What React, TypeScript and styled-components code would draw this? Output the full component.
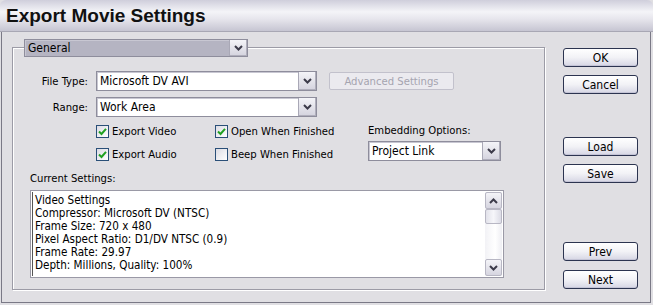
import React from 'react';
import styled, { createGlobalStyle } from 'styled-components';

const uiFont = '"DejaVu Sans Condensed", "Liberation Sans", sans-serif';

const GlobalStyle = createGlobalStyle`
  html, body {
    margin: 0;
    padding: 0;
    background: #e0dfe3;
  }
  body {
    font-family: ${uiFont};
    font-size: 11.2px;
    color: #000;
  }
`;

const Window = styled.div`
  width: 653px;
  height: 305px;
  box-sizing: border-box;
  display: flex;
  flex-direction: column;
  background: #e0dfe3;
  overflow: hidden;
`;

const TitleBar = styled.div`
  height: 31px;
  flex: none;
  display: flex;
  align-items: center;
  padding-left: 6px;
  border-top-left-radius: 6px;
  border-top-right-radius: 6px;
  background: linear-gradient(to bottom, #cfcedb 0%, #f4f4f8 38%, #e6e5ec 62%, #c6c5d2 100%);
  border-bottom: 1px solid #a8a7b4;
`;

const Title = styled.h1`
  margin: 0;
  font-family: "Liberation Sans", Arial, sans-serif;
  font-weight: bold;
  font-size: 19px;
  color: #111;
`;

const Body = styled.div`
  flex: 1;
  margin: 0 2px 2px 1px;
  border: 1px solid #7a7986;
  border-top: none;
  display: flex;
  padding: 15px 0 0 10px;
  box-sizing: border-box;
`;

const GroupBox = styled.div`
  width: 533px;
  height: 243px;
  box-sizing: border-box;
  border: 1px solid #9c9ba6;
  box-shadow: inset 1px 1px 0 #ffffff, 1px 1px 0 #ffffff;
  padding: 0 0 0 17px;
  display: flex;
  flex-direction: column;
`;

const GroupHeader = styled.div`
  margin: -9px 0 0 -6px;
  display: flex;
`;

const Select = styled.div<{ $width: number; $muted?: boolean; $height?: number }>`
  width: ${p => p.$width}px;
  height: ${p => p.$height ?? 20}px;
  box-sizing: border-box;
  display: flex;
  border: 1px solid #8e8d9c;
  background: ${p => (p.$muted ? '#b5b4c2' : '#ffffff')};
  box-shadow: inset 1px 1px 0 #c8c7d2;
`;

const SelectValue = styled.div`
  flex: 1;
  padding-left: 3px;
  display: flex;
  align-items: center;
  white-space: nowrap;
  overflow: hidden;
  font-size: 12px;
`;

const ArrowButton = styled.div`
  width: 17px;
  flex: none;
  display: flex;
  align-items: center;
  justify-content: center;
  border-left: 1px solid #a9a8b6;
  background: linear-gradient(to bottom, #f4f4f8, #d4d3de);
  box-shadow: inset -1px -1px 0 #b0afbc;
`;

const Chevron = ({ up }: { up?: boolean }) => (
  <svg width="9" height="6" viewBox="0 0 9 6">
    <path
      d={up ? 'M1 5 L4.5 1.5 L8 5' : 'M1 1 L4.5 4.5 L8 1'}
      fill="none"
      stroke="#3c3b4a"
      strokeWidth="2"
    />
  </svg>
);

const Dropdown = ({ value, width, muted, height }: { value: string; width: number; muted?: boolean; height?: number }) => (
  <Select $width={width} $muted={muted} $height={height}>
    <SelectValue>{value}</SelectValue>
    <ArrowButton>
      <Chevron />
    </ArrowButton>
  </Select>
);

const FieldRow = styled.div<{ $top: number }>`
  display: flex;
  align-items: center;
  margin-top: ${p => p.$top}px;
`;

const FieldLabel = styled.label`
  width: 58px;
  text-align: right;
  margin-right: 8px;
`;

const DisabledButton = styled.div`
  margin-left: 12px;
  width: 125px;
  height: 18px;
  box-sizing: border-box;
  border: 1px solid #c2c1cc;
  border-radius: 2px;
  background: #ebeaef;
  color: #a5a4b0;
  display: flex;
  align-items: center;
  justify-content: center;
`;

const OptionsArea = styled.div`
  display: flex;
  margin-top: 8px;
`;

const CheckGrid = styled.div`
  margin-left: 66px;
  display: grid;
  grid-template-columns: 119px 153px;
  row-gap: 10px;
  align-content: start;
`;

const CheckItem = styled.label`
  display: flex;
  align-items: center;
  gap: 3px;
  white-space: nowrap;
`;

const Box = styled.span`
  width: 13px;
  height: 13px;
  box-sizing: border-box;
  border: 1px solid #2a4f78;
  background: linear-gradient(135deg, #dcdce4, #ffffff);
  display: flex;
  align-items: center;
  justify-content: center;
`;

const Check = ({ checked, label }: { checked?: boolean; label: string }) => (
  <CheckItem>
    <Box>
      {checked && (
        <svg width="9" height="9" viewBox="0 0 9 9">
          <path d="M1 4.5 L3.5 7 L8 1.8" fill="none" stroke="#21a121" strokeWidth="2" />
        </svg>
      )}
    </Box>
    {label}
  </CheckItem>
);

const Embedding = styled.div`
  display: flex;
  flex-direction: column;
  gap: 4px;
  margin-top: -1px;
`;

const PlainLabel = styled.div``;

const SettingsLabel = styled(PlainLabel)`
  margin-top: 11px;
`;

const SettingsBox = styled.div`
  margin-top: 5px;
  width: 474px;
  height: 88px;
  box-sizing: border-box;
  border: 1px solid #9a99a6;
  background: #ffffff;
  display: flex;
  padding: 1px;
`;

const SettingsText = styled.div`
  flex: 1;
  padding: 2px 0 0 2px;
  line-height: 13px;
  font-size: 11.6px;
  border-left: 1px solid #555;
`;

const ScrollBar = styled.div`
  width: 17px;
  display: flex;
  flex-direction: column;
  background: linear-gradient(to right, #f2f2f6, #ffffff 60%, #eeeef3);
`;

const ScrollButton = styled.div`
  height: 17px;
  box-sizing: border-box;
  border: 1px solid #b8b7c4;
  border-radius: 2px;
  background: linear-gradient(to bottom, #f4f4f8, #d6d5e0);
  display: flex;
  align-items: center;
  justify-content: center;
`;

const ScrollThumb = styled.div`
  height: 15px;
  box-sizing: border-box;
  border: 1px solid #b8b7c4;
  border-radius: 2px;
  background: linear-gradient(to right, #e2e2ea, #f6f6fa 50%, #dcdce6);
`;

const ScrollTrack = styled.div`
  flex: 1;
`;

const ButtonColumn = styled.div`
  margin-left: 18px;
  width: 75px;
  display: flex;
  flex-direction: column;
  padding-top: 1px;
`;

const PushButton = styled.button<{ $gap: number }>`
  margin-top: ${p => p.$gap}px;
  width: 75px;
  height: 19px;
  padding: 0;
  border: 1px solid #2c3450;
  border-radius: 3px;
  background: linear-gradient(to bottom, #ffffff 0%, #f2f2f6 50%, #d6d6e4 100%);
  box-shadow: inset 0 -1px 0 #c4c4d6;
  font-family: ${uiFont};
  font-size: 12px;
  color: #000;
`;

const settingsLines = [
  'Video Settings',
  'Compressor: Microsoft DV (NTSC)',
  'Frame Size: 720 x 480',
  'Pixel Aspect Ratio: D1/DV NTSC (0.9)',
  'Frame Rate: 29.97',
  'Depth: Millions, Quality: 100%',
];

export default function App() {
  return (
    <Window>
      <GlobalStyle />
      <TitleBar>
        <Title>Export Movie Settings</Title>
      </TitleBar>
      <Body>
        <GroupBox>
          <GroupHeader>
            <Dropdown value="General" width={224} muted height={18} />
          </GroupHeader>
          <FieldRow $top={14}>
            <FieldLabel>File Type:</FieldLabel>
            <Dropdown value="Microsoft DV AVI" width={221} />
            <DisabledButton>Advanced Settings</DisabledButton>
          </FieldRow>
          <FieldRow $top={6}>
            <FieldLabel>Range:</FieldLabel>
            <Dropdown value="Work Area" width={221} />
          </FieldRow>
          <OptionsArea>
            <CheckGrid>
              <Check checked label="Export Video" />
              <Check checked label="Open When Finished" />
              <Check checked label="Export Audio" />
              <Check label="Beep When Finished" />
            </CheckGrid>
            <Embedding>
              <PlainLabel>Embedding Options:</PlainLabel>
              <Dropdown value="Project Link" width={133} />
            </Embedding>
          </OptionsArea>
          <SettingsLabel>Current Settings:</SettingsLabel>
          <SettingsBox>
            <SettingsText>
              {settingsLines.map(line => (
                <div key={line}>{line}</div>
              ))}
            </SettingsText>
            <ScrollBar>
              <ScrollButton>
                <Chevron up />
              </ScrollButton>
              <ScrollThumb />
              <ScrollTrack />
              <ScrollButton>
                <Chevron />
              </ScrollButton>
            </ScrollBar>
          </SettingsBox>
        </GroupBox>
        <ButtonColumn>
          <PushButton $gap={0}>OK</PushButton>
          <PushButton $gap={8}>Cancel</PushButton>
          <PushButton $gap={43}>Load</PushButton>
          <PushButton $gap={8}>Save</PushButton>
          <PushButton $gap={59}>Prev</PushButton>
          <PushButton $gap={9}>Next</PushButton>
        </ButtonColumn>
      </Body>
    </Window>
  );
}
